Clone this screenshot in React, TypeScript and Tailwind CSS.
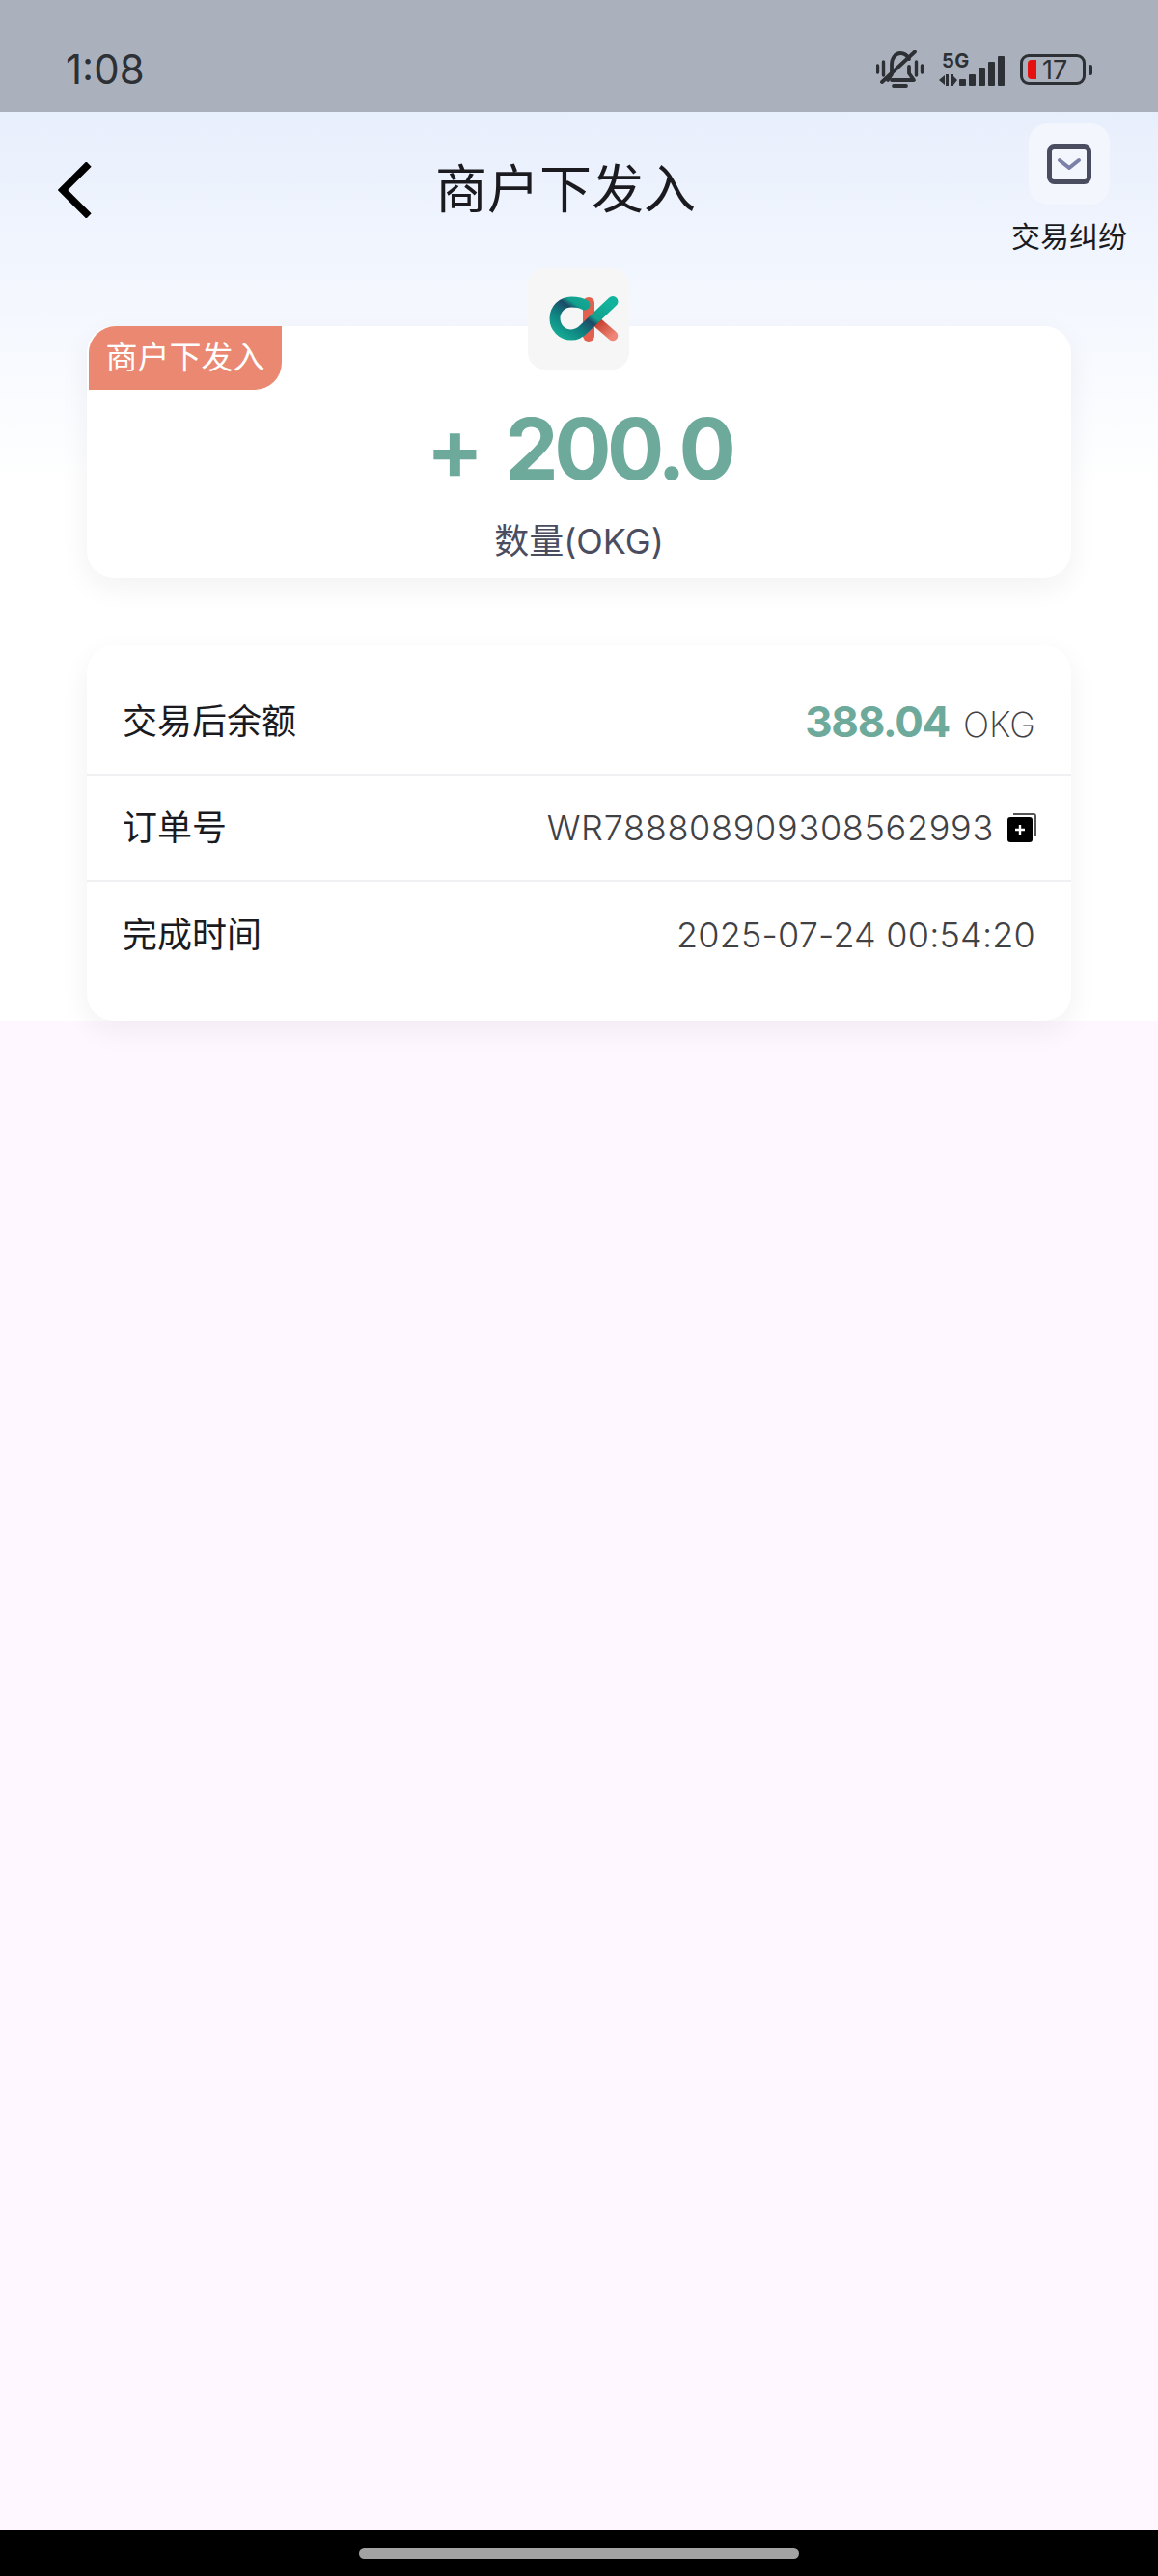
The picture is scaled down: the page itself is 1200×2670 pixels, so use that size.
// App.tsx

const latin = "font-['Inter','Noto_Sans_CJK_SC',sans-serif]";

function BellOff() {
  return (
    <svg width="49" height="40" viewBox="0 0 49 40" fill="none" stroke="#2d3034" strokeLinecap="round" strokeLinejoin="round">
      <path d="M1.5 16v7M7.5 12v14M41.5 12v14M47.5 16v7" strokeWidth="3.4" />
      <path d="M12 31l4-6V15C16 8 20 3 25 3c4 0 7 2 9 6" strokeWidth="3.8" />
      <path d="M34 17v7l5 7H16" strokeWidth="3.8" />
      <path d="M40 1.5L6 33" strokeWidth="3.8" />
      <path d="M18 37h13" strokeWidth="3.8" />
    </svg>
  );
}

function Signal() {
  return (
    <div className="relative w-[68px] h-[34px]">
      <svg width="68" height="34" viewBox="0 0 68 34" fill="#2d3034">
        <path d="M0 28l6-5v10zM7 22h3v12H7zM12 22h3v12h-3zM15 24l4 4-4 5z" />
        <rect x="21" y="27" width="7" height="7" rx="1" />
        <rect x="31" y="22" width="7" height="12" rx="1" />
        <rect x="41" y="15" width="7" height="19" rx="1" />
        <rect x="51" y="9" width="7" height="25" rx="1" />
        <rect x="61" y="3" width="7" height="31" rx="1" />
      </svg>
      <span className={`absolute left-[3px] top-[-3px] text-[20px] leading-[22px] font-bold tracking-[0.5px] text-[#2d3034] ${latin}`}>5G</span>
    </div>
  );
}

function Battery() {
  return (
    <div className="flex items-center">
      <div className="flex items-center w-[68px] h-[32px] rounded-[9px] border-[3.5px] border-[#2d3034] pl-[5px]">
        <div className="w-[9px] h-[20px] rounded-l-[4px] bg-[#e5100f]" />
        <span className={`ml-[6px] text-[27px] leading-none text-[#2d3034] ${latin}`}>17</span>
      </div>
      <div className="ml-[3px] w-[4px] h-[11px] rounded-full bg-[#2d3034]" />
    </div>
  );
}

function Logo() {
  return (
    <svg width="72" height="48" viewBox="0 0 72 48" fill="none">
      <defs>
        <linearGradient id="ring" x1="0" y1="0.9" x2="1" y2="0.1">
          <stop offset="0" stopColor="#14a892" />
          <stop offset="0.3" stopColor="#107c7e" />
          <stop offset="0.52" stopColor="#1c4a66" />
          <stop offset="0.62" stopColor="#13a08e" />
          <stop offset="1" stopColor="#12b39c" />
        </linearGradient>
        <linearGradient id="leg" x1="0" y1="0" x2="1" y2="1">
          <stop offset="0" stopColor="#c9412f" />
          <stop offset="1" stopColor="#ee8576" />
        </linearGradient>
      </defs>
      <rect x="35" y="1" width="12" height="46" rx="6" fill="#e2604d" />
      <path d="M51 28l15 13" stroke="url(#leg)" strokeWidth="10.5" strokeLinecap="round" />
      <path d="M37 9C33 6.5 28 6 23 6 13.5 6 6 13.5 6 23s7.5 17 17 17c5 0 9-2 13-6L66 5.5" stroke="url(#ring)" strokeWidth="11" strokeLinecap="round" fill="none" />
    </svg>
  );
}

function CopyIcon() {
  return (
    <svg width="30" height="30" viewBox="0 0 30 30">
      <path d="M6 1h21a2 2 0 0 1 2 2v21" fill="none" stroke="#555" strokeWidth="2" />
      <rect x="0" y="4" width="26" height="26" rx="3" fill="#000" />
      <path d="M13 12v10M8 17h10" stroke="#fff" strokeWidth="2.4" />
    </svg>
  );
}

export default function App() {
  return (
    <div className={`flex flex-col h-[2670px] w-[1200px] overflow-hidden bg-[#fef7ff] ${latin}`}>
      {/* status bar */}
      <div className="flex items-center justify-between h-[116px] shrink-0 bg-[#abb1bc] pl-[68px] pr-[68px] pt-[28px]">
        <span className="text-[42px] leading-[48px] text-[#2d3034]">1:08</span>
        <div className="flex items-center gap-[16px]">
          <BellOff />
          <Signal />
          <Battery />
        </div>
      </div>

      <div className="h-[942px] shrink-0 bg-[linear-gradient(180deg,#e8effc_0,#f2f6fe_170px,#ffffff_390px)]">
        {/* header */}
        <div className="flex items-start h-[222px] pl-[60px] pr-[32px]">
          <svg className="mt-[52px] shrink-0" width="36" height="58" viewBox="0 0 36 58" fill="none">
            <path d="M32 2L5 29l27 27" stroke="#000" strokeWidth="7.5" />
          </svg>
          <h1 className="ml-[355px] mt-[51px] text-[54px] leading-[60px] font-normal text-[#1a1a1f]">商户下发入</h1>
          <div className="ml-auto flex flex-col items-center w-[120px] pt-[12px]">
            <div className="flex items-center justify-center w-[84px] h-[84px] rounded-[20px] bg-[#f3f6fd]">
              <svg width="46" height="42" viewBox="0 0 46 42" fill="none">
                <rect x="2.5" y="2.5" width="41" height="37" rx="5" stroke="#4a4d60" strokeWidth="5" />
                <path d="M13 17l10 8 10-8" stroke="#7b80a8" strokeWidth="4" strokeLinecap="round" strokeLinejoin="round" />
              </svg>
            </div>
            <span className="mt-[15px] text-[30px] leading-[36px] whitespace-nowrap text-[#1a1a1f]">交易纠纷</span>
          </div>
        </div>

        {/* amount card */}
        <div className="relative mx-[90px] h-[261px] rounded-[28px] bg-white shadow-[0_10px_30px_rgba(30,30,60,0.06)] flex flex-col items-center pt-[72px]">
          <div className="absolute left-[2px] top-0 flex items-center justify-center w-[200px] h-[66px] rounded-tl-[28px] rounded-br-[28px] bg-[#ea8872] text-[33px] text-white">
            商户下发入
          </div>
          <div className="absolute left-[457px] top-[-60px] flex items-center w-[105px] h-[105px] pl-[22px] rounded-[18px] bg-[#f6f6f6]">
            <Logo />
          </div>
          <div className="flex items-center gap-[22px] text-[88px] leading-[110px] font-bold text-[#6eaa9b]">
            <span>+</span>
            <span className="tracking-[-4.5px]">200.0</span>
          </div>
          <div className="mt-[21px] text-[36px] leading-[40px] text-[#4a4d60]">数量(OKG)</div>
        </div>

        {/* detail card */}
        <div className="mx-[90px] mt-[70px] h-[389px] rounded-[28px] bg-white shadow-[0_10px_30px_rgba(30,30,60,0.06)] pt-[24px] text-[36px] text-[#1a1a1f]">
          <div className="flex items-center justify-between h-[111px] pl-[37px] pr-[37px] border-b-2 border-[#f0f0f2]">
            <span>交易后余额</span>
            <span className="flex items-baseline gap-[14px]">
              <b className="text-[44px] font-bold tracking-[-1.3px] text-[#6eaa9b]">388.04</b>
              <span className="font-extralight text-[#3f4145]">OKG</span>
            </span>
          </div>
          <div className="flex items-center justify-between h-[110px] pl-[37px] pr-[36px] border-b-2 border-[#f0f0f2]">
            <span>订单号</span>
            <span className="flex items-center gap-[14px] font-light tracking-[0.7px] text-[#3f4145]">
              WR788808909308562993
              <CopyIcon />
            </span>
          </div>
          <div className="flex items-center justify-between h-[110px] pl-[37px] pr-[37px]">
            <span>完成时间</span>
            <span className="font-light tracking-[0.2px] text-[#3f4145]">2025-07-24 00:54:20</span>
          </div>
        </div>
      </div>

      <div className="flex-1" />

      {/* nav bar */}
      <div className="flex items-center justify-center h-[48px] shrink-0 bg-black">
        <div className="w-[456px] h-[11px] rounded-full bg-[#a3a3a3]" />
      </div>
    </div>
  );
}
